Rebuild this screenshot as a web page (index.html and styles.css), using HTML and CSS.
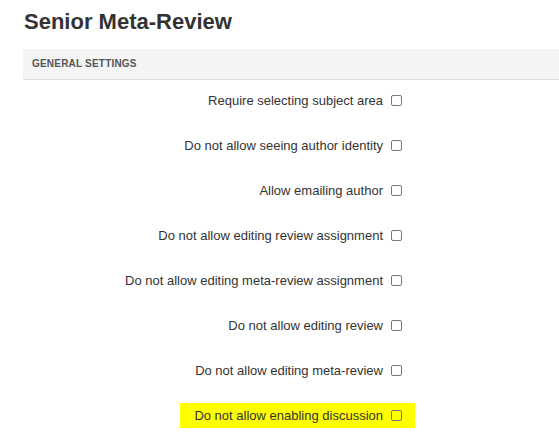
FILE: index.html
```html
<!DOCTYPE html>
<html lang="en">
<head>
    <meta charset="UTF-8">
    <meta name="viewport" content="width=device-width, initial-scale=1.0">
    <title>Senior Meta-Review</title>
    <link rel="stylesheet" href="styles.css">
</head>
<body>
    <div class="page">
        <h1>Senior Meta-Review</h1>

        <!-- General settings -->
        <div class="section-head">General Settings</div>

        <div class="settings">
            <div class="row">
                <label class="field">Require selecting subject area <input type="checkbox"></label>
            </div>
            <div class="row">
                <label class="field">Do not allow seeing author identity <input type="checkbox"></label>
            </div>
            <div class="row">
                <label class="field">Allow emailing author <input type="checkbox"></label>
            </div>
            <div class="row">
                <label class="field">Do not allow editing review assignment <input type="checkbox"></label>
            </div>
            <div class="row">
                <label class="field">Do not allow editing meta-review assignment <input type="checkbox"></label>
            </div>
            <div class="row">
                <label class="field">Do not allow editing review <input type="checkbox"></label>
            </div>
            <div class="row">
                <label class="field">Do not allow editing meta-review <input type="checkbox"></label>
            </div>
            <div class="row">
                <label class="field highlight">Do not allow enabling discussion <input type="checkbox"></label>
            </div>
        </div>
    </div>
</body>
</html>
```

FILE: styles.css
```css
/* Global Styles */
body {
    margin: 0;
    padding: 0;
    background-color: #fff;
    font-family: "Liberation Sans", Arial, sans-serif;
    color: #333;
    overflow: hidden;
}

.page {
    padding-left: 23px;
}

h1 {
    margin: 0;
    padding: 9px 0 0 1px;
    height: 49px;
    box-sizing: border-box;
    font-size: 22px;
    font-weight: bold;
    color: #333;
}

/* Section header */
.section-head {
    height: 30px;
    line-height: 30px;
    padding-left: 9px;
    background-color: #f4f4f4;
    border-bottom: 1px solid #ddd;
    font-size: 10px;
    font-weight: bold;
    letter-spacing: 0.2px;
    text-transform: uppercase;
    color: #555;
}

/* Settings rows */
.settings {
    width: 392px;
    margin-top: -2px;
}

.row {
    height: 45px;
    display: flex;
    align-items: center;
    justify-content: flex-end;
}

.field {
    display: flex;
    align-items: center;
    height: 25px;
    padding: 0 13px 0 14px;
    font-size: 13px;
}

.field input {
    appearance: none;
    -webkit-appearance: none;
    width: 11px;
    height: 11px;
    margin: 0 0 0 8px;
    border: 1px solid #777;
    border-radius: 2px;
    background: transparent;
}

.highlight {
    background-color: #ffff00;
}
```
